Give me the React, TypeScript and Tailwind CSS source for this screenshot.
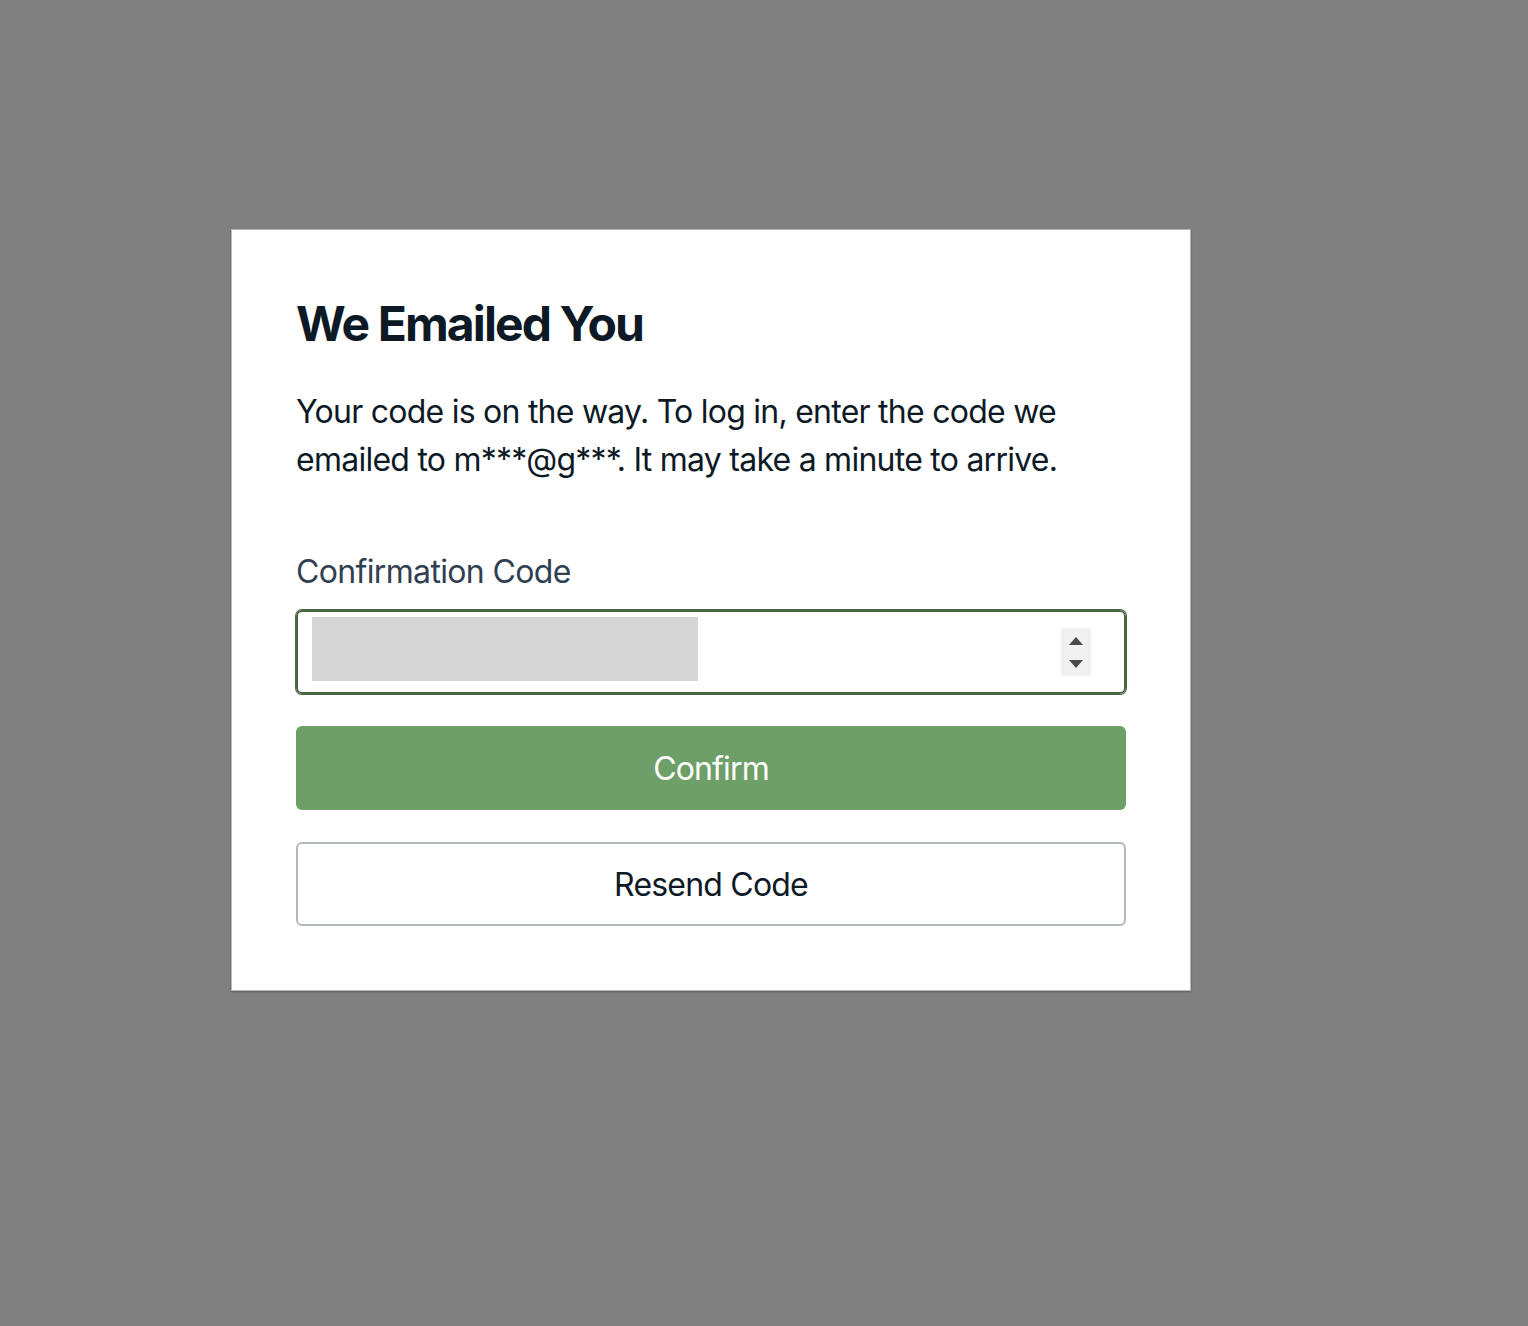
export default function App() {
  return (
    <div className="min-h-screen w-full bg-[#808080] pt-[229px] pl-[231px] font-['Inter',sans-serif]">
      <div className="w-[960px] border border-[#b3b8bd] bg-white p-16 shadow-[0_1px_2px_rgba(0,0,0,0.25)]">
        <h3 className="text-[48px] font-bold leading-[60px] tracking-[-1.9px] text-[#0d1a26]">We Emailed You</h3>
        <p className="mt-[34px] text-[32px] leading-[48px] tracking-[-0.75px] text-[#0d1a26]">
          Your code is on the way. To log in, enter the code we emailed to m***@g***. It may take a
          minute to arrive.
        </p>

        <div className="mt-[62px] flex flex-col gap-[14px]">
          <label className="pt-[2px] text-[32px] leading-[48px] tracking-[-0.65px] text-[#304050]">
            Confirmation Code
          </label>
          <div className="flex h-[84px] items-center rounded-[6px] border-2 border-[#4a6741] shadow-[0_0_0_1px_#4a6741] pl-[14px] pr-[33px]">
            <div className="mb-[6px] h-[64px] w-[386px] bg-[#d6d6d6]" />
            <div className="ml-auto flex h-[48px] w-[30px] flex-col items-center justify-center gap-[15px] bg-[#f0f0f0]">
              <svg width="14" height="8" viewBox="0 0 14 8">
                <path d="M0 8 L7 0 L14 8 Z" fill="#4a4a4a" />
              </svg>
              <svg width="14" height="8" viewBox="0 0 14 8">
                <path d="M0 0 L14 0 L7 8 Z" fill="#4a4a4a" />
              </svg>
            </div>
          </div>
        </div>

        <button className="mt-8 flex h-[84px] w-full items-center justify-center rounded-[6px] bg-[#6e9f68] pt-[2px] text-[32px] tracking-[-0.85px] text-white">
          Confirm
        </button>
        <button className="mt-8 flex h-[84px] w-full items-center justify-center rounded-[6px] border-2 border-[#b3b8bd] bg-white pt-[2px] text-[32px] tracking-[-0.8px] text-[#0d1a26]">
          Resend Code
        </button>
      </div>
    </div>
  );
}
